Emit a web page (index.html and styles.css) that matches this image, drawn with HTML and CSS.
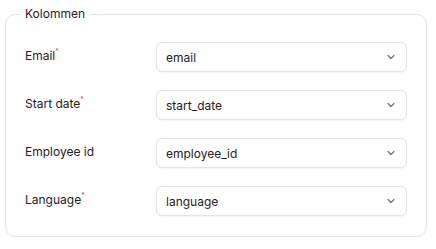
FILE: index.html
```html
<!DOCTYPE html>
<html lang="nl">
<head>
    <meta charset="UTF-8">
    <title>Kolommen</title>
    <link rel="stylesheet" href="styles.css">
</head>
<body>
    <fieldset class="columns">
        <legend>Kolommen</legend>
        <div class="field-grid">
            <label class="field-label">Email<span class="required">*</span></label>
            <div class="select">
                <span>email</span>
                <svg class="chevron" width="10" height="10" viewBox="0 0 10 10"><path d="M2 3.5 L5 6.5 L8 3.5" fill="none" stroke="#6b7280" stroke-width="1.3" stroke-linecap="round" stroke-linejoin="round"/></svg>
            </div>

            <label class="field-label">Start date<span class="required">*</span></label>
            <div class="select">
                <span>start_date</span>
                <svg class="chevron" width="10" height="10" viewBox="0 0 10 10"><path d="M2 3.5 L5 6.5 L8 3.5" fill="none" stroke="#6b7280" stroke-width="1.3" stroke-linecap="round" stroke-linejoin="round"/></svg>
            </div>

            <label class="field-label">Employee id</label>
            <div class="select">
                <span>employee_id</span>
                <svg class="chevron" width="10" height="10" viewBox="0 0 10 10"><path d="M2 3.5 L5 6.5 L8 3.5" fill="none" stroke="#6b7280" stroke-width="1.3" stroke-linecap="round" stroke-linejoin="round"/></svg>
            </div>

            <label class="field-label">Language<span class="required">*</span></label>
            <div class="select">
                <span>language</span>
                <svg class="chevron" width="10" height="10" viewBox="0 0 10 10"><path d="M2 3.5 L5 6.5 L8 3.5" fill="none" stroke="#6b7280" stroke-width="1.3" stroke-linecap="round" stroke-linejoin="round"/></svg>
            </div>
        </div>
    </fieldset>
</body>
</html>
```

FILE: styles.css
```css
/* Plain white page, Inter everywhere */
body {
    margin: 0;
    padding: 6px 9px 0 5px;
    background: #ffffff;
    font-family: Inter, 'Noto Sans', sans-serif;
    font-size: 12px;
    color: #1f2023;
}
/* Rounded group box with the title in the border */
.columns {
    margin: 0;
    padding: 20px 19px 20px 19px;
    border: 1px solid #e4e4e7;
    border-radius: 10px;
}
.columns legend {
    margin-left: -5px;
    padding: 0 5px;
    font-size: 12px;
    line-height: 16px;
    color: #1f2023;
}
/* Label column on the left, selects on the right */
.field-grid {
    display: grid;
    grid-template-columns: 131px 1fr;
    grid-auto-rows: 30px;
    row-gap: 18px;
    align-items: center;
}
.field-label {
    font-size: 12px;
    line-height: 16px;
    margin-top: -2px;
}
.required {
    color: #ef4444;
    font-size: 7px;
    line-height: 7px;
    vertical-align: top;
    position: relative;
    top: 0;
}
.select {
    display: flex;
    align-items: center;
    justify-content: space-between;
    height: 30px;
    box-sizing: border-box;
    padding: 0 10px 0 9px;
    border: 1px solid #e4e4e7;
    border-radius: 6px;
    background: #ffffff;
    box-shadow: 0 1px 2px rgba(0, 0, 0, 0.05);
    font-size: 12px;
}
.chevron {
    display: block;
}
```
